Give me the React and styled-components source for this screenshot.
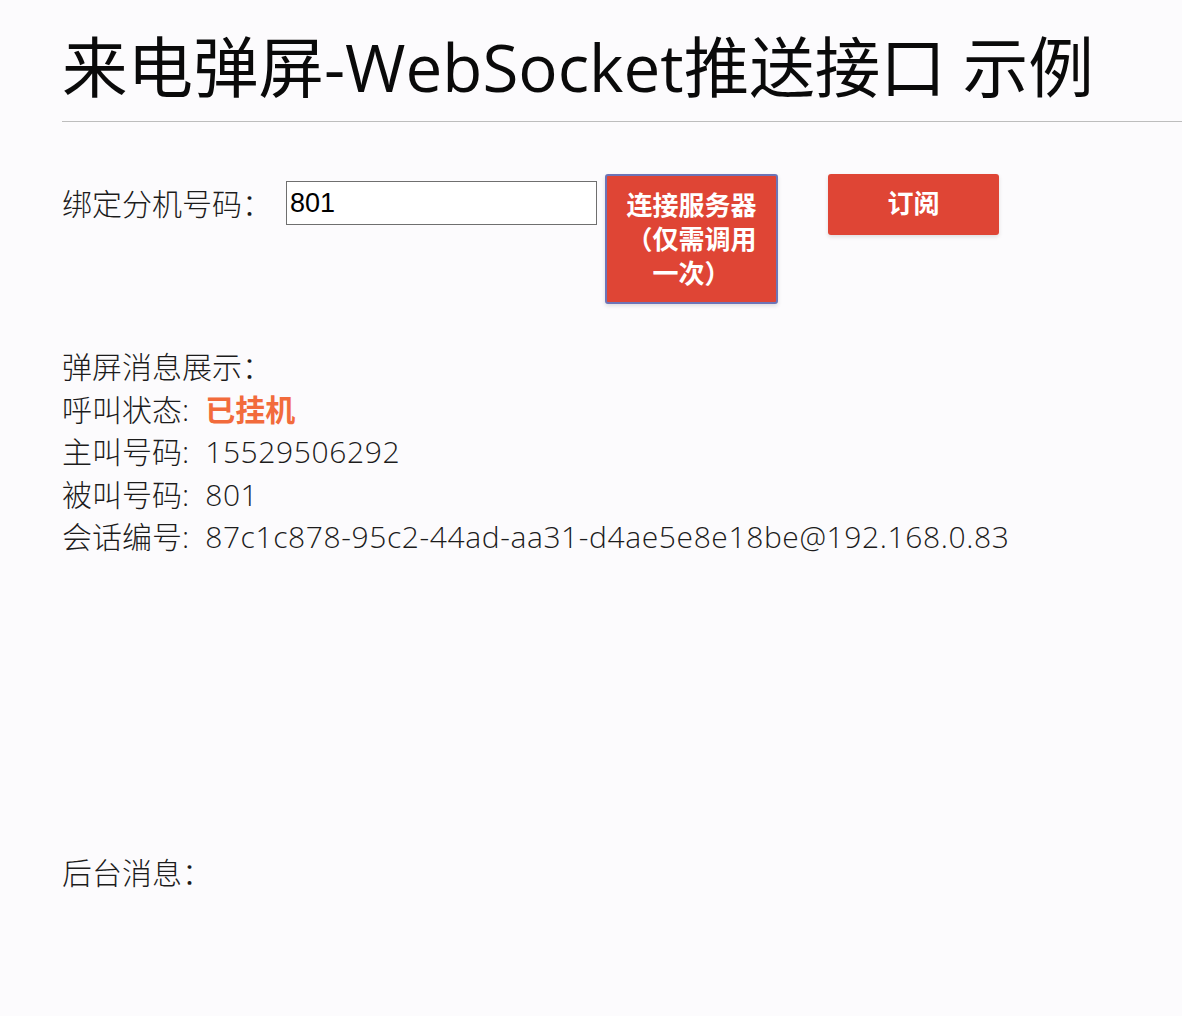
import React from "react";
import styled, { createGlobalStyle } from "styled-components";

const GlobalStyle = createGlobalStyle`
  body {
    margin: 0;
    background: #fcfbfd;
    font-family: "Open Sans", "Noto Sans CJK SC", sans-serif;
    color: #1c1c1c;
  }
`;

const Page = styled.div`
  padding-left: 62px;
  min-height: 1016px;
  box-sizing: border-box;
`;

const Title = styled.h1`
  margin: 0;
  padding-top: 27px;
  padding-bottom: 14px;
  font-size: 65.5px;
  line-height: 80px;
  font-weight: 400;
  color: #0a0a0a;
  border-bottom: 1px solid #bdbdbd;
`;

const BindRow = styled.div`
  display: flex;
  align-items: flex-start;
  margin-top: 52px;
`;

const Label = styled.span`
  margin-top: 9px;
  margin-right: 14px;
  font-size: 30px;
  line-height: 42px;
  font-weight: 300;
`;

const NumberInput = styled.input`
  margin-top: 7px;
  width: 311px;
  height: 44px;
  box-sizing: border-box;
  border: 1px solid #6f6f6f;
  padding: 0 3px;
  font-family: "Liberation Sans", Arial, sans-serif;
  font-size: 27px;
  color: #000;
  background: #fff;
  outline: none;
`;

const RedButton = styled.button`
  margin-left: ${(p) => p.$gap}px;
  width: ${(p) => p.$w}px;
  height: ${(p) => p.$h}px;
  box-sizing: border-box;
  background: #df4535;
  color: #fff;
  border: ${(p) => (p.$focused ? "2px solid #6d74b6" : "none")};
  border-radius: 3px;
  box-shadow: 0 2px 4px rgba(0, 0, 0, 0.12);
  font-family: "Noto Sans CJK SC", sans-serif;
  font-size: 26px;
  font-weight: 700;
  line-height: 34px;
  padding: ${(p) => (p.$focused ? "11px 18px 0" : "0 18px 6px")};
  display: flex;
  align-items: ${(p) => (p.$focused ? "flex-start" : "center")};
  justify-content: center;
  text-align: center;
  cursor: pointer;
`;

const Messages = styled.div`
  margin-top: 42px;
  font-size: 30px;
  line-height: 42.5px;
  font-weight: 300;
`;

const Line = styled.div``;

const Value = styled.span`
  margin-left: 16px;
  letter-spacing: ${(p) => (p.$status ? 0 : 0.6)}px;
  color: ${(p) => (p.$status ? "#f26b3c" : "inherit")};
  font-weight: ${(p) => (p.$status ? 700 : 300)};
`;

const Backend = styled.div`
  margin-top: 293px;
  font-size: 30px;
  line-height: 42px;
  font-weight: 300;
`;

const fields = [
  ["呼叫状态:", "已挂机", true],
  ["主叫号码:", "15529506292"],
  ["被叫号码:", "801"],
  ["会话编号:", "87c1c878-95c2-44ad-aa31-d4ae5e8e18be@192.168.0.83"],
];

export default function App() {
  return (
    <>
      <GlobalStyle />
      <Page>
        <Title>来电弹屏-WebSocket推送接口 示例</Title>
        <BindRow>
          <Label>绑定分机号码：</Label>
          <NumberInput defaultValue="801" />
          <RedButton $gap={8} $w={173} $h={130} $focused>
            连接服务器（仅需调用一次）
          </RedButton>
          <RedButton $gap={50} $w={171} $h={61}>
            订阅
          </RedButton>
        </BindRow>
        <Messages>
          <Line>弹屏消息展示：</Line>
          {fields.map(([key, value, status]) => (
            <Line key={key}>
              {key}
              <Value $status={status}>{value}</Value>
            </Line>
          ))}
        </Messages>
        <Backend>后台消息：</Backend>
      </Page>
    </>
  );
}
